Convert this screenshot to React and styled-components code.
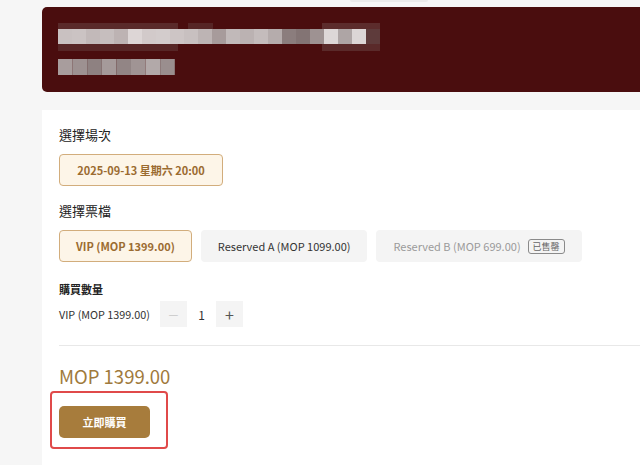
import React, { useState } from 'react';
import styled, { createGlobalStyle } from 'styled-components';

const GlobalStyle = createGlobalStyle`
  html, body {
    margin: 0;
    padding: 0;
    background: #f6f6f6;
    overflow: hidden;
  }
  body {
    font-family: "Noto Sans CJK TC", "Noto Sans", sans-serif;
    color: #222;
  }
`;

const sessions = ['2025-09-13 星期六 20:00'];

const tickets = [
  { id: 'vip', name: 'VIP', price: 1399 },
  { id: 'a', name: 'Reserved A', price: 1099 },
  { id: 'b', name: 'Reserved B', price: 699, soldOut: true },
];

// greys for the blurred title / subtitle in the banner
const titleCells = [
  '#c9c1c1', '#cbc3c3', '#c2b9b9', '#c6bebe', '#bdb3b3', '#ddd6d6', '#d2caca',
  '#d3cccc', '#cdc5c5', '#c8c0c0', '#bdb4b4', '#a79b9b', '#c1b9b9', '#bbb2b2',
  '#c4bcbc', '#b5acac', '#8b7d7d', '#837474', '#9e9292', '#ddd7d7', '#aea5a5',
  '#dcd6d6', '#5e3b3b',
];
const subCells = ['#a89d9d', '#9d9191', '#8e8181', '#a59a9a', '#928585', '#a09494', '#b2a9a9', '#9a8e8e'];

const Mosaic = () => (
  <svg width="340" height="56" viewBox="0 0 340 56">
    <rect x="0" y="0" width="120" height="6" fill="#5a2a2a" />
    <rect x="130" y="0" width="25" height="6" fill="#562525" />
    <rect x="264" y="0" width="58" height="6" fill="#5c2c2c" />
    {titleCells.map((c, i) => (
      <rect key={i} x={i * 14} y="6" width="14" height="15" fill={c} />
    ))}
    <rect x="0" y="21" width="120" height="7" fill="#572626" />
    <rect x="264" y="21" width="58" height="7" fill="#5a2a2a" />
    {subCells.map((c, i) => (
      <rect key={i} x={i * 14.6} y="36" width="14.6" height="16" fill={c} />
    ))}
  </svg>
);

const App = () => {
  const [ticket, setTicket] = useState('vip');
  const [qty, setQty] = useState(1);
  const selected = tickets.find((t) => t.id === ticket);
  const fmt = (n) => `MOP ${n.toFixed(2)}`;

  return (
    <Page>
      <GlobalStyle />
      <TopStrip>
        <TopTab />
      </TopStrip>
      <Banner>
        <Mosaic />
      </Banner>
      <Card>
        <Label>選擇場次</Label>
        <OptionRow>
          {sessions.map((s) => (
            <DateButton key={s}>{s}</DateButton>
          ))}
        </OptionRow>

        <Label $top={16}>選擇票檔</Label>
        <OptionRow>
          {tickets.map((t) => (
            <TicketButton
              key={t.id}
              $active={t.id === ticket}
              $disabled={t.soldOut}
              onClick={() => !t.soldOut && setTicket(t.id)}
            >
              {t.name} ({fmt(t.price)})
              {t.soldOut && <SoldOut>已售罄</SoldOut>}
            </TicketButton>
          ))}
        </OptionRow>

        <SmallLabel>購買數量</SmallLabel>
        <QtyRow>
          <QtyName>
            {selected.name} ({fmt(selected.price)})
          </QtyName>
          <StepButton $muted onClick={() => setQty(Math.max(1, qty - 1))}>
            —
          </StepButton>
          <QtyValue>{qty}</QtyValue>
          <StepButton onClick={() => setQty(qty + 1)}>+</StepButton>
        </QtyRow>

        <Divider />

        <Price>{fmt(selected.price * qty)}</Price>
        <BuyWrap>
          <Highlight />
          <BuyButton>立即購買</BuyButton>
        </BuyWrap>
      </Card>
    </Page>
  );
};

const Page = styled.div`
  padding-left: 42px;
  height: 465px;
  overflow: hidden;
`;

const TopStrip = styled.div`
  height: 7px;
`;

const TopTab = styled.div`
  margin-left: 308px;
  width: 78px;
  height: 2px;
  background: #ebebeb;
  border-radius: 0 0 4px 4px;
`;

const Banner = styled.div`
  height: 85px;
  background: #4a0d0e;
  border-radius: 5px 0 0 5px;
  padding: 16px 0 0 16px;
  box-sizing: border-box;
  margin-bottom: 18px;

  svg {
    display: block;
  }
`;

const Card = styled.div`
  background: #fff;
  padding: 16px 0 40px 17px;
  min-height: 400px;
`;

const Label = styled.div`
  font-size: 13px;
  line-height: 18px;
  color: #222;
  margin-top: ${(p) => p.$top || 0}px;
  margin-bottom: 10px;
`;

const OptionRow = styled.div`
  display: flex;
  gap: 9px;
`;

const DateButton = styled.button`
  width: 164px;
  height: 32px;
  border: 1px solid #d2ad7c;
  border-radius: 4px;
  background: #fdf5e8;
  color: #9b6b30;
  font-family: inherit;
  font-size: 11px;
  font-weight: 700;
  cursor: pointer;
`;

const TicketButton = styled.button`
  display: flex;
  align-items: center;
  gap: 7px;
  height: 32px;
  padding: 0 16px;
  border: 1px solid ${(p) => (p.$active ? '#d2ad7c' : 'transparent')};
  border-radius: 4px;
  background: ${(p) => (p.$active ? '#fdf5e8' : '#f4f4f4')};
  color: ${(p) => (p.$active ? '#9b6b30' : p.$disabled ? '#9a9a9a' : '#333')};
  font-family: inherit;
  font-size: 11px;
  font-weight: ${(p) => (p.$active ? 700 : 400)};
  cursor: ${(p) => (p.$disabled ? 'not-allowed' : 'pointer')};
`;

const SoldOut = styled.span`
  border: 1px solid #8a8a8a;
  border-radius: 3px;
  padding: 0 4px;
  font-size: 9px;
  line-height: 13px;
  color: #666;
`;

const SmallLabel = styled.div`
  margin-top: 19px;
  font-size: 11px;
  line-height: 16px;
  font-weight: 700;
  color: #222;
`;

const QtyRow = styled.div`
  display: flex;
  align-items: center;
  margin-top: 4px;
  height: 26px;
`;

const QtyName = styled.span`
  font-size: 10.8px;
  color: #333;
  width: 101px;
`;

const StepButton = styled.button`
  width: 27px;
  height: 26px;
  border: none;
  background: #f4f4f4;
  color: ${(p) => (p.$muted ? '#c8c8c8' : '#555')};
  font-family: inherit;
  font-size: ${(p) => (p.$muted ? 11 : 16)}px;
  padding: 0;
  cursor: pointer;
`;

const QtyValue = styled.span`
  width: 29px;
  text-align: center;
  font-size: 12px;
  color: #333;
`;

const Divider = styled.div`
  height: 1px;
  background: #e8e8e8;
  margin-top: 18px;
`;

const Price = styled.div`
  margin-top: 18px;
  font-size: 18.5px;
  line-height: 24px;
  color: #a07a3c;
`;

const BuyWrap = styled.div`
  position: relative;
  width: 91px;
  margin-top: 18px;
`;

const Highlight = styled.div`
  position: absolute;
  left: -9px;
  top: -15px;
  width: 114px;
  height: 54px;
  border: 2px solid #e04a4a;
  border-radius: 4px;
  pointer-events: none;
`;

const BuyButton = styled.button`
  display: block;
  width: 91px;
  height: 32px;
  border: none;
  border-radius: 5px;
  background: #a77c3c;
  color: #fff;
  font-family: inherit;
  font-size: 11px;
  font-weight: 700;
  cursor: pointer;
`;

export default App;
